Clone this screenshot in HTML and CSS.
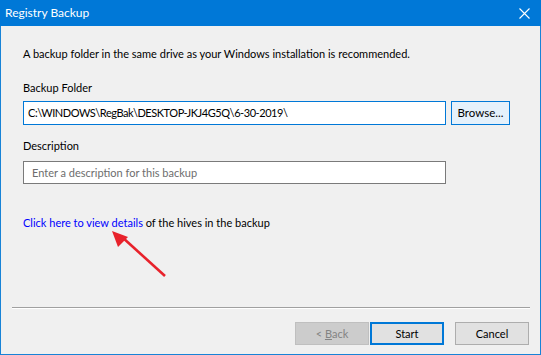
FILE: index.html
```html
<!DOCTYPE html>
<html lang="en">
<head>
<meta charset="utf-8">
<title>Registry Backup</title>
<link rel="stylesheet" href="styles.css">
</head>
<body>
<div class="window">
  <div class="titlebar">
    <span class="title">Registry Backup</span>
    <svg class="close" width="11" height="11" viewBox="0 0 11 11"><path d="M0.5 0.5 L10.5 10.5 M10.5 0.5 L0.5 10.5" stroke="#ffffff" stroke-width="1.1" fill="none"/></svg>
  </div>
  <div class="content">
    <p class="intro">A backup folder in the same drive as your Windows installation is recommended.</p>
    <label class="label first">Backup Folder</label>
    <div class="row">
      <div class="input focused path">C:\WINDOWS\RegBak\DESKTOP-JKJ4G5Q\6-30-2019\</div>
      <div class="btn browse">Browse...</div>
    </div>
    <label class="label second">Description</label>
    <div class="input desc placeholder">Enter a description for this backup</div>
    <p class="linkline"><span class="link">Click here to view details</span> of the hives in the backup</p>
    <div class="separator"></div>
    <div class="buttons">
      <div class="btn disabled">&lt; <u>B</u>ack</div>
      <div class="btn default">Start</div>
      <div class="btn cancel">Cancel</div>
    </div>
  </div>
  <svg class="arrow" width="60" height="55" viewBox="0 0 60 55">
    <line x1="55" y1="47" x2="12" y2="8" stroke="#e8222b" stroke-width="2.6"/>
    <polygon points="2,2 18,8 8,18" fill="#e8222b"/>
  </svg>
</div>
</body>
</html>
```

FILE: styles.css
```css
* { box-sizing: border-box; }
html, body { margin: 0; padding: 0; }
body {
  width: 541px;
  height: 355px;
  font-family: "Lato", "Noto Sans", sans-serif;
  font-size: 11px;
  color: #000000;
  background: #f0f0f0;
  overflow: hidden;
}
.window {
  position: relative;
  width: 541px;
  height: 355px;
  border: 1px solid #1883d7;
  border-top: none;
  background: #f0f0f0;
  display: flex;
  flex-direction: column;
}
.titlebar {
  height: 26px;
  margin: 0 -1px;
  background: #0078d7;
  color: #ffffff;
  display: flex;
  align-items: center;
  justify-content: space-between;
  padding: 0 11px 0 5px;
}
.title { font-size: 12px; line-height: 16px; }
.close { display: block; }
.content {
  flex: 1;
  display: flex;
  flex-direction: column;
  padding: 0 11px 0 22px;
}
.intro { margin: 20px 0 0; line-height: 16px; }
.label { display: block; line-height: 16px; }
.label.first { margin-top: 18px; }
.label.second { margin-top: 13px; }
.row { display: flex; gap: 5px; margin-top: 5px; }
.input {
  height: 24px;
  width: 423px;
  background: #ffffff;
  border: 1px solid #7a7a7a;
  padding: 0 0 0 4px;
  line-height: 22px;
  white-space: nowrap;
}
.input.focused { border-color: #0078d7; }
.input.path { letter-spacing: -0.45px; }
.input.desc { margin-top: 7px; height: 23px; line-height: 21px; padding-left: 8px; }
.placeholder { color: #6d6d6d; }
.btn {
  height: 24px;
  border: 1px solid #adadad;
  background: #e1e1e1;
  text-align: center;
  line-height: 22px;
}
.btn.browse {
  width: 59px;
  background: #e5f1fb;
  border-color: #0078d7;
  font-size: 11.5px;
}
.linkline { margin: 31px 0 0; line-height: 16px; }
.link { color: #0000ff; }
.separator {
  margin-top: 76px;
  width: 518px;
  margin-left: -11px;
  height: 2px;
  border-top: 1px solid #a0a0a0;
  border-bottom: 1px solid #ffffff;
}
.buttons {
  display: flex;
  justify-content: flex-end;
  margin-top: 13px;
}
.buttons .btn { width: 74px; height: 23px; line-height: 21px; }
.btn.disabled { color: #838383; background: #cccccc; border-color: #bfbfbf; }
.btn.disabled u { text-decoration: underline; }
.btn.default { margin-left: 1px; border: 2px solid #0078d7; line-height: 19px; }
.btn.cancel { margin-left: 11px; }
.arrow {
  position: absolute;
  left: 109px;
  top: 229px;
}
```
